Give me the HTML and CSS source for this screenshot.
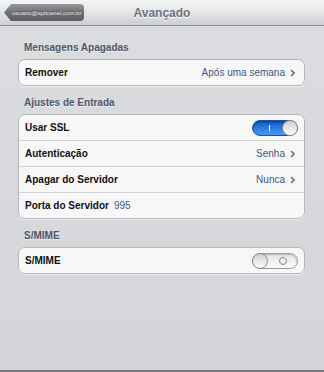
FILE: index.html
```html
<!DOCTYPE html>
<html lang="pt-BR">
<head>
<meta charset="utf-8">
<title>Avançado</title>
<link rel="stylesheet" href="styles.css">
</head>
<body>
<div class="screen">
  <header class="navbar">
    <div class="nav-left"><span class="back">usuario@splicenet.com.br</span></div>
    <h1 class="title">Avançado</h1>
    <div class="nav-right"></div>
  </header>
  <main class="content">
    <section class="section">
      <h2 class="section-title">Mensagens Apagadas</h2>
      <div class="group">
        <div class="row">
          <span class="label">Remover</span>
          <span class="value">Após uma semana</span>
          <svg class="chev" width="5" height="8" viewBox="0 0 5 8"><polyline points="1,1 4,4 1,7" fill="none" stroke="#6f7175" stroke-width="1.6"/></svg>
        </div>
      </div>
    </section>
    <section class="section">
      <h2 class="section-title">Ajustes de Entrada</h2>
      <div class="group">
        <div class="row">
          <span class="label">Usar SSL</span>
          <span class="switch on"><span class="mark-i"></span><span class="knob"></span></span>
        </div>
        <div class="row">
          <span class="label">Autenticação</span>
          <span class="value">Senha</span>
          <svg class="chev" width="5" height="8" viewBox="0 0 5 8"><polyline points="1,1 4,4 1,7" fill="none" stroke="#6f7175" stroke-width="1.6"/></svg>
        </div>
        <div class="row">
          <span class="label">Apagar do Servidor</span>
          <span class="value">Nunca</span>
          <svg class="chev" width="5" height="8" viewBox="0 0 5 8"><polyline points="1,1 4,4 1,7" fill="none" stroke="#6f7175" stroke-width="1.6"/></svg>
        </div>
        <div class="row">
          <span class="label">Porta do Servidor</span>
          <span class="inline-value">995</span>
        </div>
      </div>
    </section>
    <section class="section">
      <h2 class="section-title">S/MIME</h2>
      <div class="group">
        <div class="row">
          <span class="label">S/MIME</span>
          <span class="switch off"><span class="knob"></span><span class="mark-o"></span></span>
        </div>
      </div>
    </section>
  </main>
</div>
</body>
</html>
```

FILE: styles.css
```css
html, body {
  margin: 0;
  padding: 0;
}
body {
  width: 324px;
  height: 372px;
  overflow: hidden;
  font-family: "Liberation Sans", Arial, Helvetica, sans-serif;
}
.screen {
  width: 324px;
  height: 372px;
  box-sizing: border-box;
  background: linear-gradient(#dcdde1, #d3d5d9);
  border-bottom: 2px solid #77797d;
  display: flex;
  flex-direction: column;
}
.navbar {
  height: 25px;
  border-bottom: 1px solid #8c8e92;
  background: linear-gradient(#f5f5f6 0%, #e6e7e9 45%, #cdcfd2 100%);
  display: grid;
  grid-template-columns: 1fr auto 1fr;
  align-items: center;
}
.nav-left {
  padding-left: 4px;
  display: flex;
}
.back {
  width: 80px;
  height: 17px;
  box-sizing: border-box;
  padding-left: 8px;
  display: flex;
  align-items: center;
  font-size: 6px;
  color: #ececee;
  text-shadow: 0 -1px 0 #46484b;
  background: linear-gradient(#94969a, #6c6e72 55%, #5c5e62);
  border-radius: 0 4px 4px 0;
  clip-path: polygon(7px 0, 100% 0, 100% 100%, 7px 100%, 0 50%);
  white-space: nowrap;
  overflow: hidden;
}
.title {
  margin: 0;
  font-size: 12px;
  font-weight: bold;
  color: #6c717d;
  text-shadow: 0 1px 0 #ffffff;
  line-height: 14px;
}
.content {
  padding: 16px 19px 0 18px;
  display: flex;
  flex-direction: column;
  gap: 11px;
}
.section-title {
  margin: 0 0 5px 0;
  padding-left: 6px;
  font-size: 10px;
  line-height: 12px;
  font-weight: bold;
  color: #4d5568;
  text-shadow: 0 1px 0 #eef0f2;
}
.group {
  background: #f7f7f7;
  border: 1px solid #b4b6ba;
  border-radius: 7px;
  box-shadow: 0 1px 0 #eceef0;
}
.row {
  height: 25px;
  padding: 0 6px 0 6px;
  display: flex;
  align-items: center;
  gap: 4px;
  font-size: 10px;
  line-height: 25px;
}
.row + .row {
  border-top: 1px solid #d3d4d6;
}
.label {
  font-weight: bold;
  color: #111111;
}
.value {
  margin-left: auto;
  color: #3f5585;
}
.chev {
  margin-right: 3px;
  margin-left: 1px;
}
.inline-value {
  color: #3f5585;
  margin-left: 1px;
}
.switch {
  margin-left: auto;
  width: 46px;
  height: 16px;
  box-sizing: border-box;
  border-radius: 8px;
  position: relative;
  display: flex;
  align-items: center;
}
.switch.on {
  background: linear-gradient(#0b57bd, #2f7fe0 55%, #4c97f2);
  border: 1px solid #22509a;
  box-shadow: inset 0 1px 2px rgba(0,0,0,0.35);
  justify-content: flex-end;
}
.switch.off {
  background: linear-gradient(#e4e4e4, #fbfbfb);
  border: 1px solid #9c9c9e;
  box-shadow: inset 0 1px 2px rgba(0,0,0,0.2);
  justify-content: flex-start;
}
.knob {
  width: 16px;
  height: 16px;
  box-sizing: border-box;
  border-radius: 50%;
  background: linear-gradient(#cfcfd1, #fdfdfd);
  border: 1px solid #8e9094;
  margin: -1px;
}
.mark-i {
  position: absolute;
  left: 16px;
  top: 4px;
  width: 1px;
  height: 6px;
  background: #ffffff;
}
.mark-o {
  position: absolute;
  left: 26px;
  top: 3px;
  width: 6px;
  height: 6px;
  border: 1px solid #8a8a8c;
  border-radius: 50%;
}
```
